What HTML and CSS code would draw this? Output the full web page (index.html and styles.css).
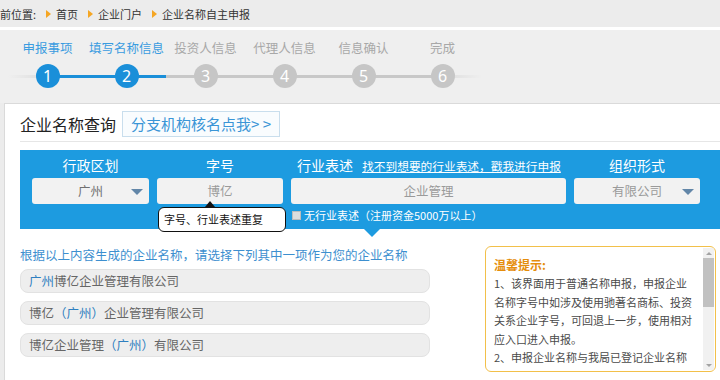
FILE: index.html
```html
<!DOCTYPE html>
<html lang="zh-CN">
<head>
    <meta charset="UTF-8">
    <title>企业名称自主申报</title>
    <link rel="stylesheet" href="styles.css">
</head>
<body>
    <div class="crumbs">
        <span class="crumbs-here">当前位置:</span>
        <span class="crumb">首页</span>
        <span class="crumb">企业门户</span>
        <span class="crumb">企业名称自主申报</span>
    </div>

    <div class="steps">
        <div class="step first done">
            <div class="step-label">申报事项</div>
            <div class="step-dot">1</div>
        </div>
        <div class="step current">
            <div class="step-label">填写名称信息</div>
            <div class="step-dot">2</div>
        </div>
        <div class="step">
            <div class="step-label">投资人信息</div>
            <div class="step-dot">3</div>
        </div>
        <div class="step">
            <div class="step-label">代理人信息</div>
            <div class="step-dot">4</div>
        </div>
        <div class="step">
            <div class="step-label">信息确认</div>
            <div class="step-dot">5</div>
        </div>
        <div class="step last">
            <div class="step-label">完成</div>
            <div class="step-dot">6</div>
        </div>
    </div>

    <div class="panel">
        <div class="query-head">
            <h2 class="query-title">企业名称查询</h2>
            <a class="branch-btn">分支机构核名点我&gt; &gt;</a>
        </div>

        <div class="query-band">
            <div class="band-label">行政区划</div>
            <div class="band-label">字号</div>
            <div class="band-label band-label-left">
                行业表述
                <a class="band-link">找不到想要的行业表述，戳我进行申报</a>
            </div>
            <div class="band-label">组织形式</div>

            <div class="field field-select field-dark">广州</div>
            <div class="field field-tip">
                博亿
                <div class="tooltip">字号、行业表述重复</div>
            </div>
            <div class="field">企业管理</div>
            <div class="field field-select">有限公司</div>

            <div></div>
            <div></div>
            <label class="no-industry">
                <input type="checkbox" class="check">
                无行业表述（注册资金5000万以上）
            </label>
            <div></div>
        </div>

        <div class="result">
            <div class="names">
                <p class="names-hint">根据以上内容生成的企业名称，请选择下列其中一项作为您的企业名称</p>
                <div class="name-list">
                    <div class="name-item"><span class="city">广州</span>博亿企业管理有限公司</div>
                    <div class="name-item">博亿<span class="city">（广州）</span>企业管理有限公司</div>
                    <div class="name-item">博亿企业管理<span class="city">（广州）</span>有限公司</div>
                </div>
            </div>

            <div class="tips">
                <div class="tips-body">
                    <h3 class="tips-title">温馨提示:</h3>
                    <p>1、该界面用于普通名称申报，申报企业名称字号中如涉及使用驰著名商标、投资关系企业字号，可回退上一步，使用相对应入口进入申报。</p>
                    <p>2、申报企业名称与我局已登记企业名称相同或近似的，系统将提示名称冲突，请修改后重新申报。</p>
                </div>
                <div class="tips-scroll">
                    <span class="scroll-btn scroll-up"></span>
                    <span class="scroll-track"><span class="scroll-thumb"></span></span>
                    <span class="scroll-btn scroll-down"></span>
                </div>
            </div>
        </div>
    </div>
</body>
</html>
```

FILE: styles.css
```css
* {
    margin: 0;
    padding: 0;
    box-sizing: border-box;
}

body {
    font-family: "Noto Sans CJK SC", "Noto Sans", sans-serif;
    background: #ececec;
    color: #333;
    width: 720px;
    height: 380px;
    overflow: hidden;
}

/* Breadcrumb */
.crumbs {
    height: 30px;
    display: flex;
    align-items: center;
    font-size: 11px;
    color: #333;
    border-bottom: 3px solid #fff;
    white-space: nowrap;
}

.crumbs-here {
    margin-left: -11px;
}

.crumb {
    display: flex;
    align-items: center;
    margin-left: 10px;
}

.crumb::before {
    content: '';
    border-left: 5px solid #f5a623;
    border-top: 4px solid transparent;
    border-bottom: 4px solid transparent;
    margin-right: 5px;
}

/* Steps */
.steps {
    display: flex;
    height: 73px;
    padding: 9px 0 0 8px;
    background: #efefef;
}

.step {
    width: 79px;
    display: flex;
    flex-direction: column;
    align-items: center;
    position: relative;
}

.step-label {
    font-size: 12.5px;
    line-height: 18px;
    color: #a8a8a8;
    white-space: nowrap;
}

.step-dot {
    width: 24px;
    height: 24px;
    margin-top: 7px;
    border-radius: 50%;
    background: #c6c6c6;
    color: #fff;
    font-family: "Noto Sans", sans-serif;
    font-size: 16px;
    line-height: 24px;
    text-align: center;
    position: relative;
    z-index: 1;
}

.step::before,
.step::after {
    content: '';
    position: absolute;
    top: 36px;
    width: 50%;
    height: 3px;
    background: #c8c8c8;
}

.step::before { left: 0; }
.step::after { right: 0; }

.step.first::before {
    background: linear-gradient(90deg, #efefef, #dcdcdc);
}

.step.last::after {
    background: linear-gradient(90deg, #dcdcdc, #efefef);
}

.step.done .step-label,
.step.current .step-label {
    color: #3a9ce0;
}

.step.done .step-dot,
.step.current .step-dot {
    background: #1a8fd9;
}

.step.done::after,
.step.current::before,
.step.current::after {
    background: #1a8fd9;
}

/* Panel */
.panel {
    margin-left: 4px;
    height: 290px;
    padding-left: 15px;
    background: #fff;
    border-top: 1px solid #dadada;
    border-left: 1px solid #dadada;
}

.query-head {
    display: flex;
    align-items: center;
    padding: 7px 0 4px;
    border-bottom: 1px solid #e6e6e6;
}

.query-title {
    font-size: 16px;
    font-weight: 400;
    color: #222;
}

.branch-btn {
    margin-left: 6px;
    height: 26px;
    padding: 0 8px;
    line-height: 24px;
    font-size: 15px;
    color: #3a95d6;
    background: #f9fcfe;
    border: 1px solid #c9deed;
}

/* Blue query band */
.query-band {
    margin-top: 8px;
    height: 79px;
    padding: 5px 0 0 12px;
    background: #1d9be0;
    display: grid;
    grid-template-columns: 117px 126px 275px 126px;
    grid-template-rows: 20px 26px 14px;
    column-gap: 8px;
    row-gap: 3px;
    position: relative;
}

.query-band::after {
    content: '';
    position: absolute;
    top: 100%;
    left: 344px;
    border-top: 8px solid #1d9be0;
    border-left: 8px solid transparent;
    border-right: 8px solid transparent;
}

.band-label {
    font-size: 14px;
    line-height: 20px;
    color: #fff;
    text-align: center;
    white-space: nowrap;
}

.band-label-left {
    text-align: left;
    padding-left: 6px;
}

.band-link {
    margin-left: 6px;
    font-size: 11.7px;
    color: #fff;
    text-decoration: underline;
}

.field {
    height: 26px;
    line-height: 26px;
    border-radius: 3px;
    background: #f2f2f2;
    font-size: 12.5px;
    color: #9a9a9a;
    text-align: center;
    position: relative;
}

.field-dark {
    color: #707070;
}

.field-select::after {
    content: '';
    position: absolute;
    right: 6px;
    top: 11px;
    border-top: 6px solid #6286a8;
    border-left: 6px solid transparent;
    border-right: 6px solid transparent;
}

.tooltip {
    position: absolute;
    top: 29px;
    left: 1px;
    width: 128px;
    height: 25px;
    padding-left: 5px;
    background: #fff;
    border: 1.5px solid #111;
    border-radius: 6px;
    font-size: 11px;
    line-height: 22px;
    color: #111;
    text-align: left;
    z-index: 2;
}

.tooltip::before {
    content: '';
    position: absolute;
    top: -7px;
    left: 46px;
    border-bottom: 6px solid #111;
    border-left: 5px solid transparent;
    border-right: 5px solid transparent;
}

.no-industry {
    display: flex;
    align-items: center;
    gap: 3px;
    margin-top: 2px;
    padding-left: 1px;
    font-size: 11px;
    line-height: 14px;
    color: #fff;
    white-space: nowrap;
}

.check {
    appearance: none;
    width: 9px;
    height: 9px;
    background: #dedede;
    border: 1px solid #bdbdbd;
}

/* Result area */
.result {
    display: flex;
    padding-top: 17px;
}

.names {
    width: 410px;
}

.names-hint {
    font-size: 12.5px;
    line-height: 17px;
    color: #3d8fcf;
    white-space: nowrap;
}

.name-list {
    margin-top: 6px;
    display: flex;
    flex-direction: column;
    gap: 8px;
}

.name-item {
    height: 24px;
    line-height: 22px;
    padding-left: 8px;
    font-size: 12.5px;
    color: #666;
    background: #eee;
    border: 1px solid #e2e2e2;
    border-radius: 8px;
}

.city {
    color: #2e7fc0;
}

.tips {
    margin-left: 55px;
    width: 231px;
    height: 126px;
    display: flex;
    border: 1.5px solid #f2c04a;
    border-radius: 6px;
    overflow: hidden;
    background: #fff;
}

.tips-body {
    flex: 1;
    overflow: hidden;
    padding: 9px 8px 0 8px;
    font-size: 11px;
    line-height: 18.5px;
    color: #4a4a4a;
}

.tips-title {
    font-size: 12px;
    line-height: 18px;
    color: #e58d0b;
    font-weight: 700;
}

/* Tip box scrollbar */
.tips-scroll {
    width: 11px;
    margin: 1px 1px 1px 0;
    display: flex;
    flex-direction: column;
    background: #f1f1f1;
}

.scroll-btn {
    height: 10px;
    display: flex;
    align-items: center;
    justify-content: center;
}

.scroll-up::before {
    content: '';
    border-bottom: 3px solid #a3a3a3;
    border-left: 3px solid transparent;
    border-right: 3px solid transparent;
}

.scroll-down::before {
    content: '';
    border-top: 3px solid #a3a3a3;
    border-left: 3px solid transparent;
    border-right: 3px solid transparent;
}

.scroll-track {
    flex: 1;
}

.scroll-thumb {
    display: block;
    height: 49px;
    background: #c1c1c1;
}
```
